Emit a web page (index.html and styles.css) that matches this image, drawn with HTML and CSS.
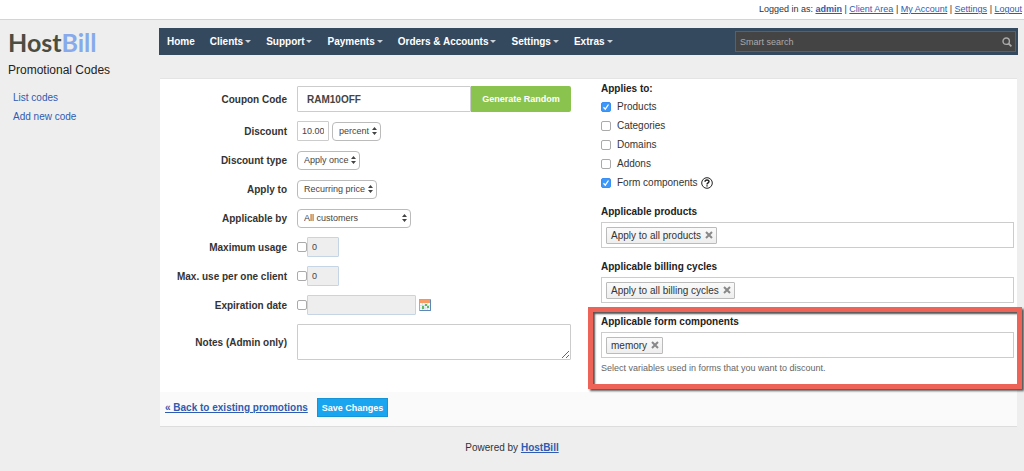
FILE: index.html
```html
<!DOCTYPE html>
<html lang="en">

<head>
    <meta charset="UTF-8">
    <meta name="viewport" content="width=device-width, initial-scale=1.0">
    <title>HostBill - Promotional Codes</title>
    <link rel="stylesheet" href="styles.css">
</head>

<body>
    <div class="topbar">
        Logged in as: <a href="#"><strong>admin</strong></a> | <a href="#">Client Area</a> | <a href="#">My Account</a> | <a href="#">Settings</a> | <a href="#">Logout</a>
    </div>

    <div class="page">
        <aside class="sidebar">
            <div class="logo">Host<span>Bill</span></div>
            <h1>Promotional Codes</h1>
            <ul>
                <li><a href="#">List codes</a></li>
                <li><a href="#">Add new code</a></li>
            </ul>
        </aside>

        <main>
            <nav class="menu">
                <a href="#">Home</a>
                <a href="#" class="drop">Clients</a>
                <a href="#" class="drop">Support</a>
                <a href="#" class="drop">Payments</a>
                <a href="#" class="drop">Orders &amp; Accounts</a>
                <a href="#" class="drop">Settings</a>
                <a href="#" class="drop">Extras</a>
                <div class="search">
                    <input type="text" placeholder="Smart search" aria-label="Smart search">
                    <svg width="10" height="10" viewBox="0 0 10 10" fill="none" stroke="#aaa" stroke-width="1.4">
                        <circle cx="4.2" cy="4.2" r="3.2" />
                        <path d="M6.6 6.6L9.4 9.4" stroke-width="1.8" />
                    </svg>
                </div>
            </nav>

            <form class="panel">
                <div class="columns">
                    <div class="fields">
                        <label for="code">Coupon Code</label>
                        <div class="field coupon">
                            <input type="text" id="code" value="RAM10OFF">
                            <button type="button">Generate Random</button>
                        </div>

                        <label for="discount">Discount</label>
                        <div class="field">
                            <input type="text" id="discount" class="short" value="10.00">
                            <select aria-label="Discount unit">
                                <option>percent</option>
                            </select>
                        </div>

                        <label for="type">Discount type</label>
                        <div class="field">
                            <select id="type">
                                <option>Apply once</option>
                            </select>
                        </div>

                        <label for="applyto">Apply to</label>
                        <div class="field">
                            <select id="applyto">
                                <option>Recurring price</option>
                            </select>
                        </div>

                        <label for="clients">Applicable by</label>
                        <div class="field">
                            <select id="clients" class="wide">
                                <option>All customers</option>
                            </select>
                        </div>

                        <label for="max">Maximum usage</label>
                        <div class="field limit">
                            <input type="checkbox" aria-label="Limit usage">
                            <input type="text" id="max" class="short" value="0" disabled>
                        </div>

                        <label for="maxclient">Max. use per one client</label>
                        <div class="field limit">
                            <input type="checkbox" aria-label="Limit use per client">
                            <input type="text" id="maxclient" class="short" value="0" disabled>
                        </div>

                        <label for="expires">Expiration date</label>
                        <div class="field limit">
                            <input type="checkbox" aria-label="Set expiration date">
                            <input type="text" id="expires" class="date" disabled>
                            <svg class="calendar" width="12" height="12" viewBox="0 0 12 12">
                                <rect x=".5" y=".5" width="11" height="11" fill="#f4f8fc" stroke="#8fb0d6" />
                                <rect x="1" y="1" width="10" height="3" fill="#f79a64" />
                                <path d="M1 6.5h10M1 9h10M3.5 4v7M6 4v7M8.5 4v7" stroke="#c5d3e4" stroke-width=".6" />
                                <rect x="6" y="5" width="2" height="2" fill="#62b860" />
                                <rect x="3" y="7" width="2" height="3" fill="#62b860" />
                                <rect x="8" y="7" width="2" height="2" fill="#62b860" />
                                <path d="M11.5 1v10.5H1" fill="none" stroke="#5d87b8" />
                            </svg>
                        </div>

                        <label for="notes">Notes (Admin only)</label>
                        <div class="field">
                            <textarea id="notes"></textarea>
                        </div>
                    </div>

                    <div class="scope">
                        <fieldset>
                            <legend>Applies to:</legend>
                            <label><input type="checkbox" checked> Products</label>
                            <label><input type="checkbox"> Categories</label>
                            <label><input type="checkbox"> Domains</label>
                            <label><input type="checkbox"> Addons</label>
                            <label><input type="checkbox" checked> Form components
                                <svg width="12" height="12" viewBox="0 0 12 12" fill="none" stroke="#222">
                                    <circle cx="6" cy="6" r="5.3" />
                                    <path d="M4 4.8C4 2.5 8 2.5 8 4.6C8 5.9 6 5.9 6 7.4M6 8.2V9.5" stroke-width="1.4" />
                                </svg>
                            </label>
                        </fieldset>

                        <section class="group">
                            <h2>Applicable products</h2>
                            <div class="tags">
                                <span class="tag">Apply to all products <button type="button" aria-label="Remove"><svg width="8" height="8" viewBox="0 0 8 8"><path d="M1 1L7 7M7 1L1 7" /></svg></button></span>
                            </div>
                        </section>

                        <section class="group">
                            <h2>Applicable billing cycles</h2>
                            <div class="tags">
                                <span class="tag">Apply to all billing cycles <button type="button" aria-label="Remove"><svg width="8" height="8" viewBox="0 0 8 8"><path d="M1 1L7 7M7 1L1 7" /></svg></button></span>
                            </div>
                        </section>

                        <section class="group highlight">
                            <h2>Applicable form components</h2>
                            <div class="tags">
                                <span class="tag">memory <button type="button" aria-label="Remove"><svg width="8" height="8" viewBox="0 0 8 8"><path d="M1 1L7 7M7 1L1 7" /></svg></button></span>
                            </div>
                            <p>Select variables used in forms that you want to discount.</p>
                        </section>
                    </div>
                </div>

                <div class="actions">
                    <a href="#">« Back to existing promotions</a>
                    <button type="submit">Save Changes</button>
                </div>
            </form>
        </main>
    </div>

    <footer>Powered by <a href="#">HostBill</a></footer>
</body>

</html>
```
FILE: styles.css
```css
:root {
    --bg: #eeeeee;
    --nav: #34495e;
    --link: #2f5bb0;
    --text: #333333;
    --border: #cccccc;
    --green: #8bc34f;
    --blue: #1aa5f0;
    --mark: #ee6358;
}

* {
    box-sizing: border-box;
}

body {
    font-family: "Liberation Sans", Arial, sans-serif;
    font-size: 10px;
    color: var(--text);
    background-color: var(--bg);
    margin: 0;
}

a {
    color: var(--link);
}

input,
select,
textarea,
button {
    font-family: inherit;
    font-size: 9px;
    color: #444;
    margin: 0;
}

.topbar {
    background-color: #fff;
    border-bottom: 1px solid #d4d4d4;
    font-size: 9px;
    line-height: 19px;
    text-align: right;
    padding-right: 2px;
}

.page {
    display: grid;
    grid-template-columns: 159px 1fr;
    padding-right: 6px;
}

/* Sidebar */
.sidebar {
    padding: 6px 8px;
}

.logo {
    font-family: Lato, sans-serif;
    font-size: 25px;
    font-weight: bold;
    line-height: 32px;
    color: #4b4d42;
}

.logo span {
    color: #86aaec;
}

h1 {
    font-size: 12px;
    font-weight: normal;
    line-height: 16px;
    color: #222;
    margin: 4px 0 10px;
}

.sidebar ul {
    list-style: none;
    margin: 0;
    padding: 0 0 0 5px;
    line-height: 19px;
}

.sidebar li a {
    text-decoration: none;
}

/* Main menu */
.menu {
    display: flex;
    align-items: center;
    gap: 15px;
    height: 27px;
    margin-top: 8px;
    padding: 0 2px 0 8px;
    background-color: var(--nav);
}

.menu a {
    color: #fff;
    font-weight: bold;
    text-decoration: none;
    white-space: nowrap;
}

.drop::after {
    content: "";
    display: inline-block;
    margin-left: 2px;
    vertical-align: 2px;
    border: 3px solid transparent;
    border-top-color: #cbd3da;
    border-bottom: 0;
}

.search {
    display: flex;
    align-items: center;
    width: 281px;
    height: 21px;
    margin-left: auto;
    padding-right: 3px;
    background-color: #444;
    border: 1px solid #3f6690;
}

.search input {
    flex: 1;
    outline: 0;
    color: #ccc;
    padding: 0 4px;
}

.search ::placeholder {
    color: #aaa;
}

/* Form panel */
.panel {
    margin: 23px 1px 0;
    background-color: #fff;
    border-bottom: 1px solid #ddd;
    border-top: 1px solid #e4e4e4;
}

.columns {
    display: grid;
    grid-template-columns: 411px 1fr;
    column-gap: 30px;
    padding: 4px 3px 5px 0;
}

.fields {
    display: grid;
    grid-template-columns: 127px 1fr;
    grid-template-rows: 26px repeat(7, 20px) 36px;
    gap: 9px 10px;
    align-items: center;
    align-content: start;
    padding-top: 3px;
}

.fields > label {
    font-weight: bold;
    text-align: right;
}

.field {
    display: flex;
    align-items: center;
    gap: 3px;
}

input[type="text"],
textarea {
    border: 1px solid var(--border);
    border-radius: 1px;
    background-color: #fff;
}

.search input[type="text"] {
    border: 0;
    background: none;
}

.coupon {
    gap: 0;
}

.coupon input[type="text"] {
    flex: 1;
    min-width: 0;
    height: 26px;
    padding: 0 9px;
    font-size: 10px;
    font-weight: bold;
}

.coupon button {
    width: 100px;
    height: 26px;
    padding: 0;
    border: 0;
    border-radius: 0 2px 2px 0;
    background-color: var(--green);
    color: #fff;
    font-weight: bold;
}

.short {
    width: 32px;
    height: 20px;
    padding: 0 4px;
}

.date {
    width: 109px;
    height: 20px;
}

.limit {
    gap: 0;
}

.limit input:disabled {
    background-color: #eee;
    border-color: #c5d5e6;
}

.calendar {
    margin-left: 3px;
}

select {
    appearance: none;
    height: 19px;
    padding: 0 10px 0 6px;
    border: 1px solid #bbb;
    border-radius: 4px;
    background: #fff url("data:image/svg+xml,%3Csvg xmlns='http://www.w3.org/2000/svg' width='5' height='8'%3E%3Cpath d='M0 3L2.5 0L5 3zM0 5L2.5 8L5 5z' fill='%23444'/%3E%3C/svg%3E") no-repeat right 3px center;
}

.wide {
    width: 114px;
}

textarea {
    display: block;
    width: 100%;
    height: 36px;
    resize: vertical;
}

input[type="checkbox"] {
    appearance: none;
    flex: none;
    width: 10px;
    height: 10px;
    border: 1px solid #aaa;
    border-radius: 2px;
    background-color: #fff;
}

input[type="checkbox"]:checked {
    border-color: #3b8ef3;
    background: #3b99fc url("data:image/svg+xml,%3Csvg xmlns='http://www.w3.org/2000/svg' width='8' height='8'%3E%3Cpath d='M1.5 4.2L3.3 6.2L6.5 1.5' fill='none' stroke='white' stroke-width='1.3'/%3E%3C/svg%3E") no-repeat center;
}

/* Right column */
fieldset {
    margin: 0 0 10px;
    padding: 0;
    border: 0;
}

legend,
h2 {
    font-size: 10px;
    font-weight: bold;
    color: #222;
    padding: 0;
    margin: 0;
}

legend {
    line-height: 12px;
    margin-bottom: 2px;
}

fieldset label {
    display: flex;
    align-items: center;
    gap: 6px;
    height: 19px;
}

fieldset label svg {
    margin-left: -3px;
}

.group {
    position: relative;
    margin-bottom: 9px;
}

h2 {
    line-height: 20px;
}

.tags {
    display: flex;
    align-items: center;
    height: 26px;
    padding: 0 4px;
    border: 1px solid var(--border);
}

.tag {
    display: flex;
    align-items: center;
    gap: 4px;
    height: 17px;
    padding: 0 3px 0 4px;
    border: 1px solid #bbb;
    border-radius: 1px;
    background: linear-gradient(#fafafa, #eee);
}

.tag button {
    display: flex;
    padding: 0;
    border: 0;
    background: none;
}

.tag path {
    stroke: #888;
    stroke-width: 2;
}

.group p {
    margin: 0;
    font-size: 9px;
    line-height: 20px;
    color: #666;
}

/* Callout frame around the group */
.highlight::after {
    content: "";
    position: absolute;
    inset: -5px -8px -11px -13px;
    border: 5px solid var(--mark);
    box-shadow: 2px 2px 2px #555, inset 2px 2px 2px #555;
    pointer-events: none;
}

.actions {
    display: flex;
    align-items: center;
    gap: 9px;
    height: 34px;
    padding: 0 5px 3px;
    background-color: #fafafa;
}

.actions a {
    font-weight: bold;
}

.actions button {
    height: 19px;
    padding: 0 4px;
    border: 1px solid #1694da;
    background-color: var(--blue);
    color: #fff;
    font-weight: bold;
}

footer {
    padding: 15px 0;
    text-align: center;
}

footer a {
    font-weight: bold;
}
```
